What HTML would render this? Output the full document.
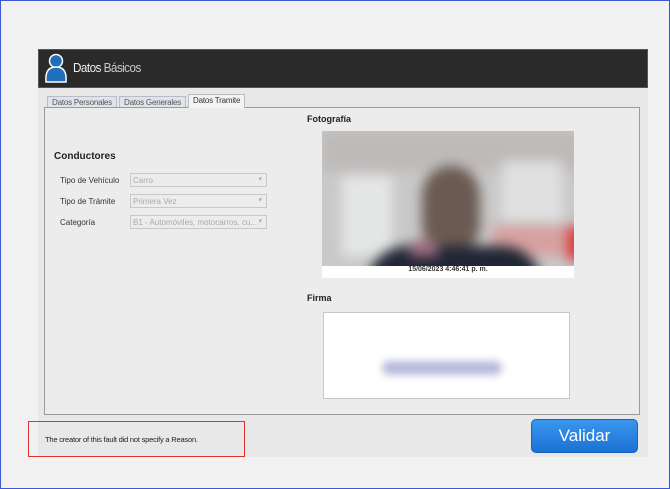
<!DOCTYPE html>
<html><head><meta charset="utf-8"><style>
*{margin:0;padding:0;box-sizing:border-box}
body{width:670px;height:489px;background:#f1f1f1;position:relative;overflow:hidden;font-family:"Liberation Sans",sans-serif;}
.a{position:absolute}
.frame{left:0;top:0;width:670px;height:489px;border:1px solid #3a5bd0;}
.dlg{left:38px;top:49px;width:610px;height:408px;background:#e9e8e9;}
.hdr{left:38px;top:49px;width:610px;height:39px;background:#2a2a2a;border:1px solid #555;}
.tab{top:96px;height:12px;font-size:8px;color:#555;border:1px solid #b8bcc4;background:#dfe3ea;padding:1px 4px 0;letter-spacing:-.2px}
.panel{left:44px;top:107px;width:596px;height:308px;border:1px solid #9a9a9a;background:#ececec}
.lbl{font-size:8px;color:#333;left:60px}
.cb{left:130px;width:137px;height:14px;border:1px solid #c8c8c8;background:#ececec;font-size:8px;color:#aaa;padding:2px 0 0 2px}
.cb:after{content:"▾";position:absolute;right:4px;top:1px;font-size:7px;color:#aaa}
</style></head><body>
<div class="a frame"></div>
<div class="a dlg"></div>
<div class="a hdr"></div>
<svg class="a" style="left:44px;top:53px" width="24" height="32" viewBox="0 0 24 32"><circle cx="12" cy="8" r="6.5" fill="#1f70b8" stroke="#fff" stroke-width="1.5"/><path d="M2 29 C1 18 5 14 12 14 C19 14 23 18 22 29 Z" fill="#1f70b8" stroke="#fff" stroke-width="1.5"/></svg>
<div class="a" style="left:73px;top:60px;font-size:13px;color:#eee;letter-spacing:-.6px;transform:scaleX(.9);transform-origin:left">Datos <span style="color:#ccc">Básicos</span></div>
<div class="a tab" style="left:47px">Datos Personales</div>
<div class="a tab" style="left:119px">Datos Generales</div>
<div class="a panel"></div>
<div class="a tab" style="left:188px;top:94px;height:14px;background:#f3f3f3;color:#333;border-bottom:none;z-index:2">Datos Tramite</div>
<div class="a" style="left:54px;top:151px;font-size:10px;font-weight:bold;color:#222">Conductores</div>
<div class="a lbl" style="top:176px">Tipo de Vehículo</div>
<div class="a lbl" style="top:197px">Tipo de Trámite</div>
<div class="a lbl" style="top:218px">Categoría</div>
<div class="a cb" style="top:173px">Carro</div>
<div class="a cb" style="top:194px">Primera Vez</div>
<div class="a cb" style="top:215px">B1 - Automóviles, motocarros, cu...</div>
<div class="a" style="left:307px;top:114px;font-size:9px;font-weight:bold;color:#222">Fotografía</div>
<div class="a" style="left:322px;top:131px;width:252px;height:147px;background:#fff;overflow:hidden">
 <div class="a" style="left:0;top:0;width:252px;height:135px;background:#c9c9c9;overflow:hidden">
  <div class="a" style="left:-10px;top:-10px;width:272px;height:160px;filter:blur(6px)">
   <div class="a" style="left:10px;top:10px;width:272px;height:40px;background:#bdbab8"></div>
   <div class="a" style="left:30px;top:55px;width:50px;height:80px;background:#e4e6e6"></div>
   <div class="a" style="left:190px;top:40px;width:60px;height:60px;background:#e0e0e0"></div>
   <div class="a" style="left:180px;top:105px;width:90px;height:30px;background:#d6a0a0"></div>
   <div class="a" style="left:255px;top:105px;width:20px;height:35px;background:#d84040"></div>
   <div class="a" style="left:110px;top:45px;width:58px;height:88px;border-radius:29px;background:#6a5a52"></div>
   <div class="a" style="left:55px;top:125px;width:175px;height:50px;border-radius:40px 40px 0 0;background:#202634"></div>
   <div class="a" style="left:98px;top:120px;width:28px;height:16px;background:#9a6a80"></div>
  </div>
 </div>
 <div class="a" style="left:0;top:135px;width:252px;text-align:center;font-size:7px;font-weight:bold;color:#333">15/06/2023 4:46:41 p. m.</div>
</div>
<div class="a" style="left:307px;top:293px;font-size:9px;font-weight:bold;color:#222">Firma</div>
<div class="a" style="left:323px;top:312px;width:247px;height:87px;background:#fff;border:1px solid #c8c8c8;overflow:hidden">
 <div class="a" style="left:58px;top:48px;width:120px;height:14px;background:#b8b8dc;border-radius:7px;filter:blur(4px)"></div>
</div>
<div class="a" style="left:28px;top:421px;width:217px;height:36px;border:1px solid #e03030"></div>
<div class="a" style="left:45px;top:435px;font-size:7.5px;color:#222;letter-spacing:-.2px">The creator of this fault did not specify a Reason.</div>
<div class="a" style="left:531px;top:419px;width:107px;height:34px;border-radius:5px;background:linear-gradient(#3b96ee,#1a72d4);border:1px solid #1a62c0;color:#fff;font-size:17px;text-align:center;line-height:32px">Validar</div>
</body></html>
